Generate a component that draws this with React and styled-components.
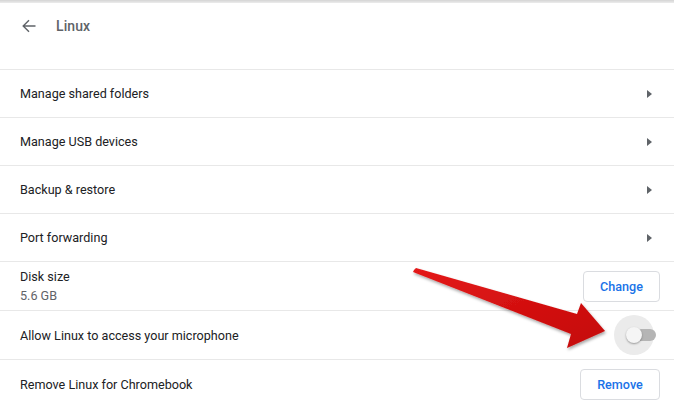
import React from "react";
import styled, { createGlobalStyle } from "styled-components";

const Global = createGlobalStyle`
  body {
    margin: 0;
    background: #fff;
    font-family: Roboto, "Liberation Sans", sans-serif;
  }
`;

const rows = [
  "Manage shared folders",
  "Manage USB devices",
  "Backup & restore",
  "Port forwarding",
];

const App = () => {
  return (
    <Page>
      <Global />
      <TopShadow />
      <Header>
        <BackButton>
          <svg width="14" height="14" viewBox="0 0 14 14">
            <path d="M13.5 7H1.2M7 1.2L1.2 7L7 12.8" stroke="#5f6368" strokeWidth="1.4" fill="none" />
          </svg>
        </BackButton>
        <Title>Linux</Title>
      </Header>
      <List>
        {rows.map((r) => (
          <Row key={r}>
            <Label>{r}</Label>
            <Caret />
          </Row>
        ))}
        <Row $h="48px">
          <TwoLine>
            <Label>Disk size</Label>
            <Sub>5.6 GB</Sub>
          </TwoLine>
          <Button $w="77px">Change</Button>
        </Row>
        <Row $h="48px">
          <Label>Allow Linux to access your microphone</Label>
          <ToggleWrap>
            <Ripple />
            <Track />
            <Knob />
          </ToggleWrap>
        </Row>
        <Row $h="49px" $last>
          <Label>Remove Linux for Chromebook</Label>
          <Button $w="80px">Remove</Button>
        </Row>
      </List>
      <Arrow width="674" height="420" viewBox="0 0 674 420">
        <defs>
          <linearGradient id="red" x1="0" y1="0" x2="1" y2="1">
            <stop offset="0" stopColor="#e41a1a" />
            <stop offset="1" stopColor="#c40808" />
          </linearGradient>
          <filter id="sh" x="-10%" y="-10%" width="130%" height="140%">
            <feDropShadow dx="1" dy="2" stdDeviation="1.6" floodColor="#000" floodOpacity="0.35" />
          </filter>
        </defs>
        <path
          d="M414 270 L416 268 L577 314 L581 303 L605 331 L567 348 L571 334 L413 272 Z"
          fill="url(#red)"
          filter="url(#sh)"
          strokeLinejoin="round"
        />
      </Arrow>
    </Page>
  );
};

export default App;

const Page = styled.div`
  position: relative;
  width: 674px;
  height: 420px;
  background: #fff;
  overflow: hidden;
`;

const TopShadow = styled.div`
  height: 3px;
  background: linear-gradient(#d4d4d4, #ececec);
`;

const Header = styled.div`
  height: 45px;
  display: flex;
  align-items: center;
  padding: 0 0 0 22px;
`;

const BackButton = styled.div`
  width: 14px;
  height: 14px;
  display: flex;
  margin-right: 20px;
`;

const Title = styled.div`
  font-size: 14px;
  color: #5f6368;
  font-weight: 500;
  letter-spacing: 0.1px;
`;

const List = styled.div`
  margin-top: 21px;
  border-top: 1px solid #e8e8e8;
`;

const Row = styled.div`
  height: ${(p) => p.$h || "47px"};
  display: flex;
  align-items: center;
  justify-content: space-between;
  padding: 0 14px 0 20px;
  border-bottom: ${(p) => (p.$last ? "none" : "1px solid #e8e8e8")};
`;

const Label = styled.div`
  font-size: 12.6px;
  color: #202124;
`;

const TwoLine = styled.div`
  display: flex;
  flex-direction: column;
  gap: 4px;
`;

const Sub = styled.div`
  font-size: 12.6px;
  color: #5f6368;
`;

const Caret = styled.div`
  width: 0;
  height: 0;
  border-top: 4px solid transparent;
  border-bottom: 4px solid transparent;
  border-left: 5px solid #5f6368;
  margin-right: 8px;
`;

const Button = styled.div`
  width: ${(p) => p.$w};
  height: 31px;
  box-sizing: border-box;
  border: 1px solid #dadce0;
  border-radius: 4px;
  display: flex;
  align-items: center;
  justify-content: center;
  font-size: 12.6px;
  font-weight: 500;
  color: #1a73e8;
`;

const ToggleWrap = styled.div`
  position: relative;
  width: 44px;
  height: 40px;
  margin-right: 2px;
`;

const Ripple = styled.div`
  position: absolute;
  left: 0;
  top: 0;
  width: 40px;
  height: 40px;
  border-radius: 50%;
  background: #ebebeb;
`;

const Track = styled.div`
  position: absolute;
  left: 18px;
  top: 14px;
  width: 24px;
  height: 12px;
  border-radius: 6px;
  background: #b5b5b5;
`;

const Knob = styled.div`
  position: absolute;
  left: 12px;
  top: 12px;
  width: 16px;
  height: 16px;
  border-radius: 50%;
  background: #f5f5f5;
  box-shadow: 0 1px 2px rgba(0, 0, 0, 0.35);
`;

const Arrow = styled.svg`
  position: absolute;
  left: 0;
  top: 0;
  pointer-events: none;
`;
